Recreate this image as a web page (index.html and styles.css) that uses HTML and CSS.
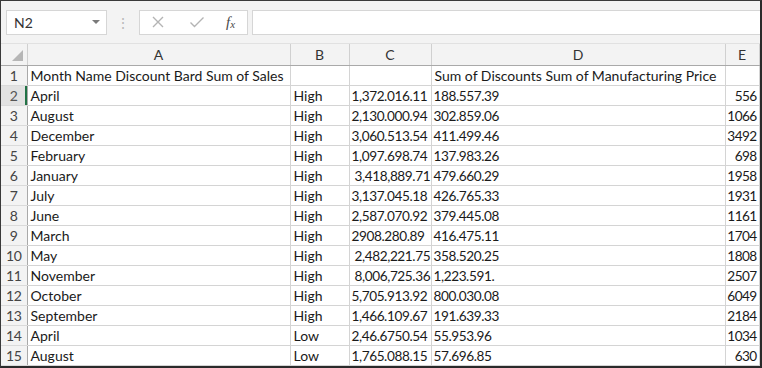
FILE: index.html
```html
<!DOCTYPE html>
<html lang="en">
<head>
    <meta charset="UTF-8">
    <meta name="viewport" content="width=device-width, initial-scale=1.0">
    <title>Sales sheet</title>
    <link rel="stylesheet" href="styles.css">
</head>
<body>
    <div class="frame">
        <div class="toolbar">
            <div class="namebox">
                <span>N2</span>
                <span class="caret"></span>
            </div>
            <div class="grip">&#8942;</div>
            <div class="fxbuttons">
                <svg class="ico" width="14" height="14" viewBox="0 0 14 14"><path d="M2 2 L12 12 M12 2 L2 12" stroke="#b4b4b4" stroke-width="1.4" fill="none"/></svg>
                <svg class="ico" width="16" height="14" viewBox="0 0 16 14"><path d="M1.5 7.5 L5.5 11.5 L14.5 2.5" stroke="#b4b4b4" stroke-width="1.4" fill="none"/></svg>
                <span class="fx">f<sub>x</sub></span>
            </div>
            <div class="formula"></div>
        </div>

        <table class="sheet">
            <colgroup>
                <col class="c-rh">
                <col class="c-a">
                <col class="c-b">
                <col class="c-c">
                <col class="c-d">
                <col class="c-e">
            </colgroup>
            <thead>
                <tr>
                    <th class="corner"><span class="tri"></span></th>
                    <th>A</th>
                    <th>B</th>
                    <th>C</th>
                    <th>D</th>
                    <th>E</th>
                </tr>
            </thead>
            <tbody id="rows"></tbody>
        </table>
    </div>

    <script>
        const data = [
            ['Month Name Discount Bard Sum of Sales', '', '', 'Sum of Discounts Sum of Manufacturing Price', ''],
            ['April', 'High', '1,372.016.11', '188.557.39', '556'],
            ['August', 'High', '2,130.000.94', '302.859.06', '1066'],
            ['December', 'High', '3,060.513.54', '411.499.46', '3492'],
            ['February', 'High', '1,097.698.74', '137.983.26', '698'],
            ['January', 'High', ' 3,418,889.71', '479.660.29', '1958'],
            ['July', 'High', '3,137.045.18', '426.765.33', '1931'],
            ['June', 'High', '2,587.070.92', '379.445.08', '1161'],
            ['March', 'High', '2908.280.89', '416.475.11', '1704'],
            ['May', 'High', ' 2,482,221.75', '358.520.25', '1808'],
            ['November', 'High', ' 8,006,725.36', '1,223.591.', '2507'],
            ['October', 'High', '5,705.913.92', '800.030.08', '6049'],
            ['September', 'High', '1,466.109.67', '191.639.33', '2184'],
            ['April', 'Low', '2,46.6750.54', '55.953.96', '1034'],
            ['August', 'Low', '1,765.088.15', '57.696.85', '630']
        ];

        const tbody = document.getElementById('rows');
        data.forEach((row, i) => {
            const tr = document.createElement('tr');
            const rh = document.createElement('td');
            rh.className = 'rh' + (i === 1 ? ' active' : '');
            rh.textContent = i + 1;
            tr.appendChild(rh);
            row.forEach((val, j) => {
                const td = document.createElement('td');
                td.textContent = val;
                if (i > 0 && (j === 2 || j === 3)) td.className = 'amt';
                if (j === 4) td.className = 'num';
                tr.appendChild(td);
            });
            tbody.appendChild(tr);
        });
    </script>
</body>
</html>
```

FILE: styles.css
```css
body {
    margin: 0;
    background: #ffffff;
    font-family: Lato, "Liberation Sans", sans-serif;
}
.frame {
    width: 759px;
    height: 365px;
    border-top: 1px solid #3a3a3a;
    border-left: 1px solid #3a3a3a;
    border-right: 2px solid #2a2a2a;
    border-bottom: 2px solid #2a2a2a;
    overflow: hidden;
    background: #ffffff;
}
.toolbar {
    display: flex;
    align-items: center;
    height: 43px;
    padding: 0 0 0 5px;
    background: #f3f3f3;
    border-bottom: 1px solid #e1e1e1;
    box-sizing: border-box;
}
.namebox {
    width: 101px;
    height: 25px;
    box-sizing: border-box;
    background: #fff;
    border: 1px solid #d6d6d6;
    display: flex;
    align-items: center;
    justify-content: space-between;
    padding: 0 6px 0 7px;
    font-size: 14px;
    color: #333;
}
.caret {
    width: 0;
    height: 0;
    border-left: 4px solid transparent;
    border-right: 4px solid transparent;
    border-top: 4px solid #7a7a7a;
}
.grip {
    width: 32px;
    text-align: center;
    color: #b9b9b9;
    font-size: 14px;
}
.fxbuttons {
    width: 109px;
    height: 25px;
    box-sizing: border-box;
    background: #fff;
    border: 1px solid #d6d6d6;
    display: flex;
    align-items: center;
    padding: 0 0 0 11px;
    gap: 24px;
}
.fx {
    font-family: "Liberation Serif", serif;
    font-style: italic;
    font-size: 15px;
    color: #4a4a4a;
    margin-left: -3px;
}
.fx sub {
    font-size: 11px;
    vertical-align: -1px;
}
.formula {
    flex: 1;
    height: 25px;
    margin-left: 4px;
    box-sizing: border-box;
    background: #fff;
    border: 1px solid #d6d6d6;
    border-right: none;
}
.sheet {
    border-collapse: collapse;
    table-layout: fixed;
    width: 758px;
    font-size: 14px;
    color: #1a1a1a;
}
.c-rh { width: 26px; }
.c-a { width: 263px; }
.c-b { width: 59px; }
.c-c { width: 82px; }
.c-d { width: 294px; }
.c-e { width: 34px; }
th {
    height: 21px;
    padding: 0;
    font-weight: normal;
    background: #f3f3f3;
    border-right: 1px solid #d0d0d0;
    border-bottom: 1px solid #a9a9a9;
    color: #333;
    font-size: 14px;
}
th.corner {
    position: relative;
}
.tri {
    position: absolute;
    right: 4px;
    bottom: 4px;
    width: 0;
    height: 0;
    border-left: 11px solid transparent;
    border-bottom: 11px solid #b6b6b6;
}
td {
    height: 19px;
    padding: 0 0 0 3px;
    border-right: 1px solid #d4d4d4;
    border-bottom: 1px solid #d4d4d4;
    white-space: pre;
    overflow: hidden;
}
td.amt {
    padding-left: 2px;
    font-size: 13.6px;
    letter-spacing: -0.4px;
}
td.rh {
    background: #f3f3f3;
    text-align: center;
    padding: 0;
    color: #444;
    letter-spacing: -0.3px;
    border-right: 1px solid #a9a9a9;
    border-bottom: 1px solid #dadada;
}
td.rh.active {
    color: #555;
    background: #e2e2e2;
    box-shadow: inset -2px 0 0 #217346;
}
td.num {
    text-align: right;
    padding: 0 2px 0 0;
    font-size: 13.6px;
    letter-spacing: -0.6px;
}
```
